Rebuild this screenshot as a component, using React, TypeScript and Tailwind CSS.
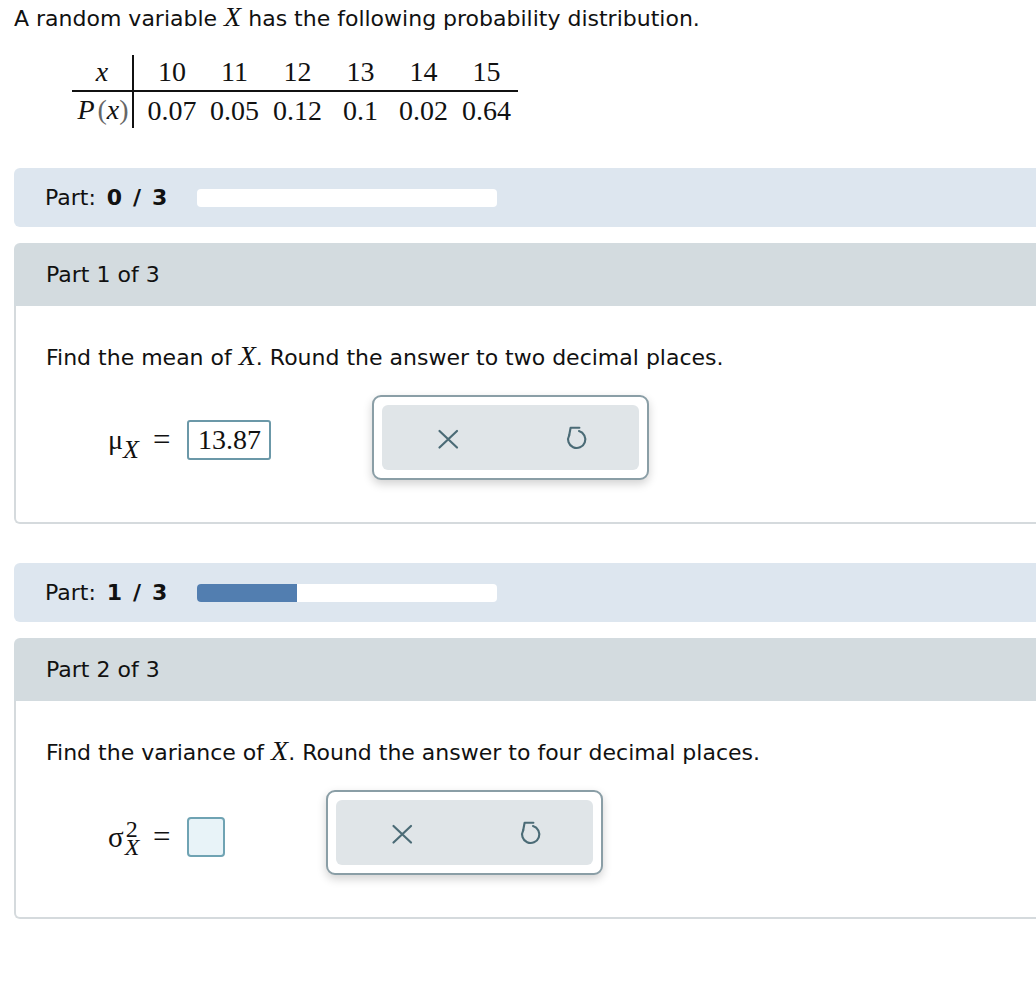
import React from "react";

const sans = { fontFamily: '"DejaVu Sans", Verdana, sans-serif' };
const serif = { fontFamily: '"Liberation Serif", "Times New Roman", serif' };

function XIcon() {
  return (
    <svg width="22" height="22" viewBox="0 0 22 22" fill="none">
      <path d="M2.5 3 L20 19.5 M20 3 L2.5 19.5" stroke="#4b6b76" strokeWidth="2.2" strokeLinecap="round" />
    </svg>
  );
}

function UndoIcon() {
  return (
    <svg width="26" height="26" viewBox="0 0 26 26" fill="none">
      <path d="M15 5.1 A8.6 8.6 0 1 1 5.2 9.2" stroke="#4b6b76" strokeWidth="2.1" strokeLinecap="round" />
      <path d="M15.4 1.8 H6.6 L5.2 9.2" stroke="#4b6b76" strokeWidth="2.1" strokeLinecap="round" strokeLinejoin="round" />
    </svg>
  );
}

function ButtonGroup() {
  return (
    <div className="w-[277px] h-[85px] rounded-[9px] border-2 border-[#8a9ea6] bg-white p-[8px] shadow-[0_4px_10px_rgba(0,0,0,0.18)]">
      <div className="w-full h-full rounded-[6px] bg-[#e0e5e8] grid grid-cols-2 items-center">
        <div className="flex justify-center pt-[2px] pl-[2px]">
          <XIcon />
        </div>
        <div className="flex justify-center pt-[2px] pl-[4px]">
          <UndoIcon />
        </div>
      </div>
    </div>
  );
}

function Progress({ done }: { done: number }) {
  return (
    <div className="ml-[14px] h-[59px] bg-[#dde6ef] rounded-l-[6px] flex items-center pl-[31px] text-[22px] text-[#111]">
      <span className="w-[152px] whitespace-nowrap">
        Part:<span className="font-bold ml-[11px] tracking-[1.6px]">{done} / 3</span>
      </span>
      <div className="w-[300px] h-[18px] bg-white rounded-[4px] overflow-hidden flex">
        <div className="h-full bg-[#527eb0]" style={{ width: `${(done / 3) * 100}%` }} />
      </div>
    </div>
  );
}

function Card({ n, children, question }: { n: number; children: React.ReactNode; question: React.ReactNode }) {
  return (
    <div className="ml-[14px]">
      <div className="h-[63px] bg-[#d3dbdf] rounded-tl-[6px] flex items-center pl-[32px] text-[22px] text-[#111]">
        Part {n} of 3
      </div>
      <div className="border-l-2 border-b-2 border-[#d5dadd] rounded-bl-[6px] pl-[30px] pt-[38px] pb-[42px]">
        <div className="text-[22px] text-[#111] leading-[28px] h-[28px]">{question}</div>
        <div className="mt-[23px] flex items-start">{children}</div>
      </div>
    </div>
  );
}

const VarX = () => (
  <span style={serif} className="italic text-[28px] leading-[20px]">
    X
  </span>
);

const valCls = (i: number) => (i === 0 ? "w-[70px] pl-[7px]" : "w-[63px]");

export default function App() {
  return (
    <div className="w-[1036px] min-h-[998px] bg-white overflow-hidden" style={sans}>
      <div className="pl-[14px] pt-[4px] h-[34px] text-[22px] text-[#111] leading-[30px] whitespace-nowrap">
        A random variable <VarX /> has the following probability distribution.
      </div>

      <div className="ml-[72px] mt-[21px]" style={serif}>
        <table className="border-collapse text-[28px] text-[#111] leading-[32px]">
          <tbody>
            <tr className="h-[36px]">
              <td className="w-[61px] text-center italic pb-[2px] border-r-2 border-b-2 border-[#111]">x</td>
              {["10", "11", "12", "13", "14", "15"].map((v, i) => (
                <td key={v} className={`text-center pb-[2px] border-b-2 border-[#111] ${valCls(i)}`}>
                  {v}
                </td>
              ))}
            </tr>
            <tr className="h-[37px]">
              <td className="text-center border-r-2 border-[#111] whitespace-nowrap pl-[3px] pr-[1px]">
                <span className="italic">P</span>
                <span className="text-[#666] ml-[3px]">(</span>
                <span className="italic">x</span>
                <span className="text-[#666]">)</span>
              </td>
              {["0.07", "0.05", "0.12", "0.1", "0.02", "0.64"].map((v, i) => (
                <td key={v} className={`text-center pt-[1px] ${valCls(i)}`}>
                  {v}
                </td>
              ))}
            </tr>
          </tbody>
        </table>
      </div>

      <div className="mt-[40px]">
        <Progress done={0} />
      </div>

      <div className="mt-[16px]">
        <Card
          n={1}
          question={
            <>
              Find the mean of <VarX />. Round the answer to two decimal places.
            </>
          }
        >
          <div className="mt-[25px] ml-[62px] flex items-center text-[28px] text-[#111] leading-[32px]" style={serif}>
            <span className="w-[32px] whitespace-nowrap">
              μ<span className="italic relative top-[9px] text-[26px]">X</span>
            </span>
            <span className="ml-[13px] text-[31px]">=</span>
            <div className="ml-[17px] w-[84px] h-[40px] border-2 border-[#6b98a8] rounded-[3px] flex items-center justify-center">
              13.87
            </div>
          </div>
          <div className="ml-[101px]">
            <ButtonGroup />
          </div>
        </Card>
      </div>

      <div className="mt-[39px]">
        <Progress done={1} />
      </div>

      <div className="mt-[16px]">
        <Card
          n={2}
          question={
            <>
              Find the variance of <VarX />. Round the answer to four decimal places.
            </>
          }
        >
          <div className="mt-[27px] ml-[62px] flex items-center text-[28px] text-[#111]" style={serif}>
            <span className="inline-flex items-center w-[36px]">
              <span className="leading-[32px] text-[29px]">σ</span>
              <span className="inline-flex flex-col items-start gap-[3px] text-[24px] mt-[3px] ml-[1px]">
                <span className="pl-[1px] leading-[15px]">2</span>
                <span className="italic leading-[15px]">X</span>
              </span>
            </span>
            <span className="ml-[9px] text-[31px] leading-[32px]">=</span>
            <div className="ml-[17px] w-[38px] h-[40px] border-2 border-[#6fa3b3] bg-[#e8f3f8] rounded-[4px]" />
          </div>
          <div className="ml-[101px]">
            <ButtonGroup />
          </div>
        </Card>
      </div>
    </div>
  );
}
